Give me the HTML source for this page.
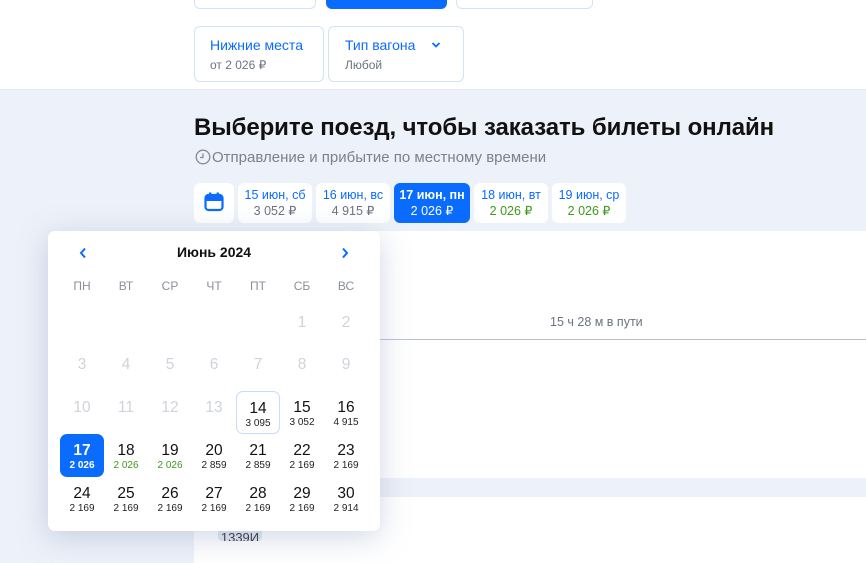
<!DOCTYPE html>
<html><head><meta charset="utf-8"><style>
*{margin:0;padding:0;box-sizing:border-box}
body{width:866px;height:563px;overflow:hidden;background:#edf1f9;font-family:"Liberation Sans","Noto Sans CJK SC",sans-serif;position:relative}
.abs{position:absolute}
.top{left:0;top:0;width:866px;height:90px;background:#fff;border-bottom:1px solid #e3e9f3}
.btn{border:1px solid #cfe3fb;border-radius:6px;background:#fff}
.tab{position:absolute;top:183px;height:40px;background:#fff;border-radius:6px;text-align:center;font-size:12.5px;line-height:16px;padding-top:4px;white-space:nowrap}
.tab .a{color:#0a6cff}
.tab .b{color:#6b7380}
.g{color:#3d9a1a!important}
.cal{left:48px;top:231px;width:332px;height:300px;background:#fff;border-radius:7px;box-shadow:0 6px 30px rgba(120,140,180,.35)}
.c{position:absolute;width:44px;text-align:center}
.n{font-size:15.5px;color:#111;line-height:18px}
.p{font-size:10px;color:#222;line-height:12px}
.d{color:#cfd3d9}
.w{font-size:12px;color:#8a909a}
</style></head><body>
<div class="abs top">
 <div class="abs btn" style="left:194px;top:-6px;width:122px;height:15px"></div>
 <div class="abs" style="left:326px;top:-6px;width:121px;height:15px;background:#0a6cff;border-radius:6px"></div>
 <div class="abs btn" style="left:456px;top:-6px;width:137px;height:15px"></div>
 <div class="abs btn" style="left:194px;top:26px;width:130px;height:56px">
  <div style="position:absolute;left:15px;top:10px;font-size:14px;color:#0a6cff">Нижние места</div>
  <div style="position:absolute;left:15px;top:31px;font-size:12px;color:#6b7380">от 2 026 ₽</div></div>
 <div class="abs btn" style="left:328px;top:26px;width:136px;height:56px">
  <div style="position:absolute;left:16px;top:10px;font-size:14px;color:#0a6cff">Тип вагона</div>
  <svg style="position:absolute;left:102px;top:14px" width="10" height="8" viewBox="0 0 10 8"><path d="M1.5 2l3.5 3.5L8.5 2" stroke="#0a6cff" stroke-width="1.8" fill="none"/></svg>
  <div style="position:absolute;left:16px;top:31px;font-size:12px;color:#6b7380">Любой</div></div>
</div>
<div class="abs" style="left:194px;top:114px;font-size:24px;font-weight:bold;color:#111;letter-spacing:-0.1px;white-space:nowrap">Выберите поезд, чтобы заказать билеты онлайн</div>
<svg class="abs" style="left:195px;top:149px" width="16" height="16" viewBox="0 0 16 16"><circle cx="8" cy="8" r="6.8" stroke="#858c96" stroke-width="1.3" fill="none"/><path d="M8 4.5V8.5H5" stroke="#858c96" stroke-width="1.3" fill="none"/></svg>
<div class="abs" style="left:212px;top:149px;font-size:15px;color:#7a828d;white-space:nowrap">Отправление и прибытие по местному времени</div>
<div class="tab" style="left:194px;width:40px;padding-top:9px"><svg width="20" height="20" viewBox="0 0 20 20"><rect x="1.5" y="3" width="17" height="15" rx="3" fill="none" stroke="#0a6cff" stroke-width="2.2"/><rect x="1.5" y="3" width="17" height="6" rx="2" fill="#0a6cff"/><rect x="5" y="0.5" width="2.4" height="4" fill="#0a6cff"/><rect x="12.6" y="0.5" width="2.4" height="4" fill="#0a6cff"/></svg></div>
<div class="tab" style="left:238px;width:74px"><div class="a">15 июн, сб</div><div class="b">3 052 ₽</div></div>
<div class="tab" style="left:316px;width:74px"><div class="a">16 июн, вс</div><div class="b">4 915 ₽</div></div>
<div class="tab" style="left:394px;width:76px;background:#0a6cff"><div style="color:#fff;font-weight:bold">17 июн, пн</div><div style="color:#fff">2 026 ₽</div></div>
<div class="tab" style="left:474px;width:74px"><div class="a">18 июн, вт</div><div class="b g">2 026 ₽</div></div>
<div class="tab" style="left:552px;width:74px"><div class="a">19 июн, ср</div><div class="b g">2 026 ₽</div></div>
<div class="abs" style="left:194px;top:231px;width:672px;height:247px;background:#fff"></div>
<div class="abs" style="left:380px;top:339px;width:486px;height:1px;background:#b9c3d3"></div>
<div class="abs" style="left:550px;top:315px;font-size:12.5px;color:#6b7380">15 ч 28 м в пути</div>
<div class="abs" style="left:194px;top:497px;width:672px;height:66px;background:#fff"></div>
<div class="abs" style="left:218px;top:522px;width:44px;height:19px;background:#e3e8f1;border-radius:4px;font-size:13px;text-align:center;padding-top:8px;color:#333;overflow:hidden">1339И</div>
<div class="abs cal">
 <svg style="position:absolute;left:31px;top:16px" width="8" height="12" viewBox="0 0 8 12"><path d="M6 1.5L2 6l4 4.5" stroke="#0a6cff" stroke-width="2" fill="none"/></svg>
 <svg style="position:absolute;left:293px;top:16px" width="8" height="12" viewBox="0 0 8 12"><path d="M2 1.5L6 6l-4 4.5" stroke="#0a6cff" stroke-width="2" fill="none"/></svg>
 <div style="position:absolute;left:0;width:332px;top:13px;text-align:center;font-size:14px;font-weight:bold;color:#111">Июнь 2024</div>
 <div id="g"></div>
</div>
<script>
var g=document.getElementById('g'),h='',cx=[34,78,122,166,210,254,298];
['ПН','ВТ','СР','ЧТ','ПТ','СБ','ВС'].forEach(function(t,i){h+='<div class="c w" style="left:'+(cx[i]-22)+'px;top:48px">'+t+'</div>'});
var pr={14:'3 095',15:'3 052',16:'4 915',17:'2 026',18:'2 026',19:'2 026',20:'2 859',21:'2 859',22:'2 169',23:'2 169',24:'2 169',25:'2 169',26:'2 169',27:'2 169',28:'2 169',29:'2 169',30:'2 914'};
var rows=[83,125,168,211,254];
for(var d=1;d<=30;d++){var idx=d+4,r=Math.floor(idx/7),c=idx%7,x=cx[c]-22,y=rows[r];
 if(d<14){h+='<div class="c n d" style="left:'+x+'px;top:'+y+'px">'+d+'</div>';continue}
 var st='',nc='',pc='';
 if(d==17){st='background:#0a6cff;border-radius:7px;';nc='color:#fff;font-weight:bold';pc='color:#fff;font-weight:bold'}
 if(d==14){st='border:1px solid #c6dcf8;border-radius:7px;'}
 if(d==18||d==19)pc='color:#3d9a1a';
 h+='<div class="c" style="left:'+x+'px;top:'+(y-8)+'px;height:43px;padding-top:8px;'+st+'"><div class="n" style="'+nc+'">'+d+'</div><div class="p" style="'+pc+'">'+pr[d]+'</div></div>';}
g.innerHTML=h;
</script>
</body></html>
